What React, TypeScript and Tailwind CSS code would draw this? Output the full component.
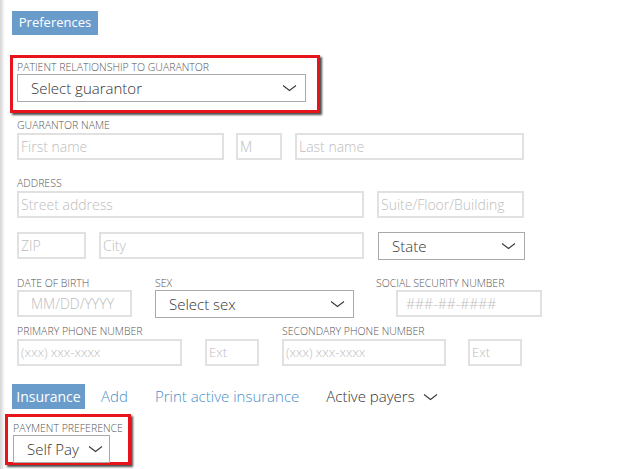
import type { ReactNode } from 'react'

const font = { fontFamily: '"Open Sans", "Liberation Sans", sans-serif' }

function Chevron({ className = '' }: { className?: string }) {
  return (
    <svg width="15" height="8" viewBox="0 0 15 8" className={className}>
      <polyline
        points="1,1.5 7.5,6.5 14,1.5"
        fill="none"
        stroke="#3a3a3a"
        strokeWidth="1.1"
      />
    </svg>
  )
}

function Label({ children, className = '' }: { children: ReactNode; className?: string }) {
  return (
    <div className={`text-[10.5px] font-light uppercase leading-[12px] text-[#555] ${className}`}>
      {children}
    </div>
  )
}

function Input({ placeholder, w }: { placeholder: string; w: string }) {
  return (
    <div
      className={`flex h-[27px] items-center border-2 border-[#e1e1e1] pl-[2px] text-[14px] font-light text-[#bdbdbd] ${w}`}
    >
      {placeholder}
    </div>
  )
}

function Select({
  value,
  w,
  pad = 'pl-[13px] pr-[8px]',
}: {
  value: string
  w: string
  pad?: string
}) {
  return (
    <div
      className={`flex h-[28px] items-center justify-between border border-[#aaaaaa] text-[15px] font-light text-[#333] ${pad} ${w}`}
    >
      <span>{value}</span>
      <Chevron />
    </div>
  )
}

export default function App() {
  return (
    <div className="flex h-[469px] w-[624px] overflow-hidden bg-white" style={font}>
      <div className="w-[5px] shrink-0 bg-gradient-to-r from-[#d4d4d4] to-white" />
      <div className="flex flex-1 flex-col">
        <div className="mt-[11px] ml-[7px] flex h-[24px] w-[86px] items-center justify-center bg-[#6a9ccb] text-[13px] text-white">
          Preferences
        </div>

        <div className="mt-[20px] ml-[5px] h-[58px] w-[310px] border-[3px] border-[#e8141b] pl-[4px] pt-[3px] shadow-[2px_2px_2px_rgba(0,0,0,0.7)]">
          <Label>Patient relationship to guarantor</Label>
          <Select value="Select guarantor" w="w-[289px] mt-[1px]" />
        </div>

        <div className="ml-[12px] flex flex-col">
          <Label className="mt-[6px]">Guarantor name</Label>
          <div className="mt-[2px] flex">
            <Input placeholder="First name" w="w-[207px]" />
            <Input placeholder="M" w="w-[46px] ml-[12px]" />
            <Input placeholder="Last name" w="w-[229px] ml-[13px]" />
          </div>

          <Label className="mt-[17px]">Address</Label>
          <div className="mt-[2px] flex">
            <Input placeholder="Street address" w="w-[347px]" />
            <Input placeholder="Suite/Floor/Building" w="w-[147px] ml-[13px]" />
          </div>

          <div className="mt-[14px] flex">
            <Input placeholder="ZIP" w="w-[69px]" />
            <Input placeholder="City" w="w-[265px] ml-[13px]" />
            <Select value="State" w="w-[147px] ml-[14px]" />
          </div>

          <div className="mt-[17px] flex">
            <div className="flex flex-col">
              <Label>Date of birth</Label>
              <div className="mt-[1px]">
                <Input placeholder="MM/DD/YYYY" w="w-[115px] pl-[12px]" />
              </div>
            </div>
            <div className="ml-[23px] flex flex-col">
              <Label>Sex</Label>
              <div className="mt-[1px]">
                <Select value="Select sex" w="w-[199px]" />
              </div>
            </div>
            <div className="ml-[22px] flex flex-col">
              <Label>Social security number</Label>
              <div className="mt-[1px] ml-[20px]">
                <Input placeholder="###-##-####" w="w-[146px] pl-[8px]" />
              </div>
            </div>
          </div>

          <div className="mt-[7px] flex">
            <div className="flex flex-col">
              <Label>Primary phone number</Label>
              <div className="mt-[2px] flex">
                <Input placeholder="(xxx) xxx-xxxx" w="w-[165px] !text-[13px]" />
                <Input placeholder="Ext" w="w-[54px] ml-[23px] !text-[13px]" />
              </div>
            </div>
            <div className="ml-[23px] flex flex-col">
              <Label>Secondary phone number</Label>
              <div className="mt-[2px] flex">
                <Input placeholder="(xxx) xxx-xxxx" w="w-[164px] !text-[13px]" />
                <Input placeholder="Ext" w="w-[54px] ml-[22px] !text-[13px]" />
              </div>
            </div>
          </div>
        </div>

        <div className="mt-[18px] ml-[7px] flex h-[25px] items-center text-[15px] font-light">
          <div className="flex h-full w-[73px] items-center justify-center bg-[#6a9ccb] text-[14px] font-normal text-white">
            Insurance
          </div>
          <span className="ml-[16px] text-[#4a8fc9]">Add</span>
          <span className="ml-[27px] text-[#4a8fc9]">Print active insurance</span>
          <span className="ml-[27px] text-[#333]">Active payers</span>
          <Chevron className="ml-[8px]" />
        </div>

        <div className="mt-[5px] ml-0 h-[51px] w-[126px] border-[3px] border-[#e8141b] pl-[5px] pt-[5px] shadow-[2px_2px_2px_rgba(0,0,0,0.7)]">
          <Label>Payment preference</Label>
          <Select value="Self Pay" w="w-[97px] mt-[1px]" pad="pl-[13px] pr-[6px]" />
        </div>
      </div>
    </div>
  )
}
